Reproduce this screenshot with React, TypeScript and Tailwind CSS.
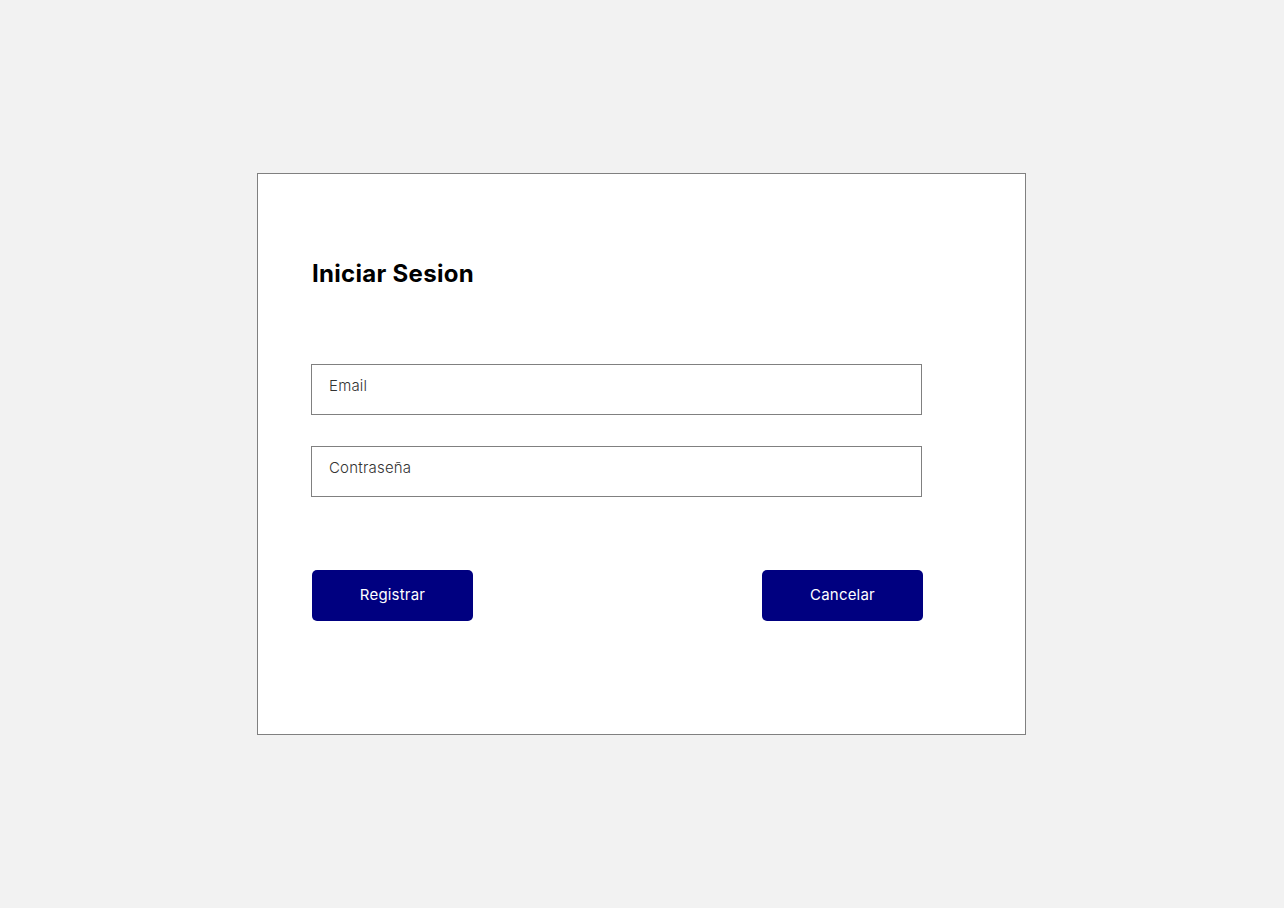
export default function App() {
  return (
    <div className="min-h-screen bg-[#f2f2f2] flex items-center justify-center font-['Inter','Liberation_Sans',sans-serif]">
      <div className="mr-px w-[769px] h-[562px] bg-white border border-[#808080] pl-[53px] pt-[85px]">
        <h1 className="ml-px text-[24px] leading-[30px] font-bold tracking-[0.3px] text-black">Iniciar Sesion</h1>

        <div className="mt-[75px] flex flex-col gap-[31px]">
          <div className="w-[611px] h-[51px] border border-[#808080] pl-[17px] pt-[11px] text-[15px] leading-[20px] font-light tracking-[0.2px] text-[#333333]">
            Email
          </div>
          <div className="w-[611px] h-[51px] border border-[#808080] pl-[17px] pt-[11px] text-[15px] leading-[20px] font-light tracking-[0.2px] text-[#333333]">
            Contraseña
          </div>
        </div>

        <div className="mt-[73px] ml-px w-[611px] flex justify-between">
          <button className="w-[161px] h-[51px] rounded-[5px] bg-[#000080] text-white text-[15px] tracking-[0.2px]">
            Registrar
          </button>
          <button className="w-[161px] h-[51px] rounded-[5px] bg-[#000080] text-white text-[15px] tracking-[0.2px]">
            Cancelar
          </button>
        </div>
      </div>
    </div>
  );
}
